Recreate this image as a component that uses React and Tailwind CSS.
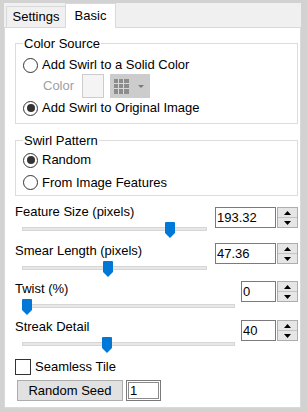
import React from 'react';

function Radio({ checked, label }) {
  return (
    <div className="flex items-center gap-[4px]">
      <span className="w-[15px] h-[15px] rounded-full border border-[#333] bg-white flex items-center justify-center">
        {checked && <span className="w-[8px] h-[8px] rounded-full bg-[#333]" />}
      </span>
      <span>{label}</span>
    </div>
  );
}

function Thumb() {
  return (
    <svg width="10" height="16" viewBox="0 0 10 16">
      <path d="M1 0H9A1 1 0 0 1 10 1V11L5 16L0 11V1A1 1 0 0 1 1 0Z" fill="#0078d7" />
    </svg>
  );
}

function Slider({ thumbLeft, trackClass }) {
  return (
    <div className="relative h-[20px] pt-[6px]">
      <div className={`h-[4px] ml-[7px] bg-[#e7e7e7] border border-[#d6d6d6] ${trackClass}`} />
      <div className="absolute top-[1px]" style={{ left: thumbLeft }}>
        <Thumb />
      </div>
    </div>
  );
}

function Spin({ value, inputClass }) {
  return (
    <div className="flex h-[21px]">
      <div className={`h-full border border-[#7a7a7a] bg-white pl-[1px] leading-[19px] ${inputClass}`}>{value}</div>
      <div className="ml-[1px] w-[21px] h-full border border-[#adadad] bg-[#e6e6e6] flex flex-col">
        <div className="flex-1 flex items-center justify-center border-b border-[#c4c4c4]">
          <svg width="7" height="4" viewBox="0 0 7 4"><path d="M0 4L3.5 0L7 4Z" fill="#000" /></svg>
        </div>
        <div className="flex-1 flex items-center justify-center">
          <svg width="7" height="4" viewBox="0 0 7 4"><path d="M0 0L3.5 4L7 0Z" fill="#000" /></svg>
        </div>
      </div>
    </div>
  );
}

function Setting({ label, thumbLeft, trackClass, value, inputClass, spinClass, className }) {
  return (
    <div className={`flex items-start ${className}`}>
      <div className="flex-1 min-w-0">
        <div className="h-[18px] leading-[18px]">{label}</div>
        <Slider thumbLeft={thumbLeft} trackClass={trackClass} />
      </div>
      <div className={spinClass}>
        <Spin value={value} inputClass={inputClass} />
      </div>
    </div>
  );
}

export default function App() {
  return (
    <div className="w-[307px] h-[412px] bg-[#d2d2d2] pt-[3px] pl-[4px] pr-[6px] pb-[4px] flex flex-col text-[13px] text-black font-['Liberation_Sans',Arial,sans-serif]">
      {/* Tabs */}
      <div className="h-[24px] bg-[#f0f0f0] flex items-end">
        <div className="ml-[2px] w-[60px] h-[21px] border border-b-0 border-[#d9d9d9] bg-[#f0f0f0] flex items-center justify-center leading-[20px]">
          Settings
        </div>
        <div className="relative z-10 -ml-[1px] -mb-[1px] w-[51px] h-[25px] border border-b-0 border-[#d9d9d9] bg-white flex items-center justify-center leading-[20px]">
          Basic
        </div>
      </div>

      {/* Panel */}
      <div className="flex-1 bg-white border border-[#d9d9d9] pl-[10px] pr-[2px] flex flex-col">
        <fieldset className="mt-[7px] border border-[#dcdcdc] pl-[7px] pb-[5px]">
          <legend className="px-[1px] leading-[17px]">Color Source</legend>
          <div className="mt-[2px] h-[22px] flex items-center">
            <Radio label="Add Swirl to a Solid Color" />
          </div>
          <div className="-mt-[2px] h-[24px] flex items-center">
            <span className="ml-[20px] w-[39px] text-[#a0a0a0]">Color</span>
            <span className="w-[22px] h-[24px] border border-[#cccccc] bg-[#f4f4f4]" />
            <span className="ml-[6px] w-[40px] h-[24px] bg-[#cccccc] flex items-center pl-[4px]">
              <svg width="15" height="15" viewBox="0 0 15 15">
                <rect x="0" y="0" width="15" height="15" fill="#d9d9d9" />
                <rect x="0" y="0" width="4" height="4" fill="#8c8c8c" />
                <rect x="5" y="0" width="4" height="4" fill="#8c8c8c" />
                <rect x="10" y="0" width="5" height="4" fill="#8c8c8c" />
                <rect x="0" y="5" width="4" height="4" fill="#8c8c8c" />
                <rect x="5" y="5" width="4" height="4" fill="#8c8c8c" />
                <rect x="10" y="5" width="5" height="4" fill="#8c8c8c" />
                <rect x="0" y="10" width="4" height="5" fill="#8c8c8c" />
                <rect x="5" y="10" width="4" height="5" fill="#8c8c8c" />
                <rect x="10" y="10" width="5" height="5" fill="#8c8c8c" />
              </svg>
              <svg className="ml-[9px]" width="6" height="3" viewBox="0 0 6 3"><path d="M0 0L3 3L6 0Z" fill="#7a7a7a" /></svg>
            </span>
          </div>
          <div className="h-[20px] flex items-center">
            <Radio checked label="Add Swirl to Original Image" />
          </div>
        </fieldset>

        <fieldset className="mt-[8px] border border-[#dcdcdc] pl-[7px] pb-[1px]">
          <legend className="px-[1px] leading-[17px]">Swirl Pattern</legend>
          <div className="h-[22px] flex items-center">
            <Radio checked label="Random" />
          </div>
          <div className="h-[23px] flex items-center">
            <Radio label="From Image Features" />
          </div>
        </fieldset>

        <Setting
          className="mt-[7px]"
          label="Feature Size (pixels)"
          thumbLeft={150}
          trackClass="mr-[8px]"
          value="193.32"
          inputClass="w-[61px]"
          spinClass="mt-[4px]"
        />
        <Setting
          className="mt-[1px]"
          label="Smear Length (pixels)"
          thumbLeft={88}
          trackClass="mr-[8px]"
          value="47.36"
          inputClass="w-[61px]"
          spinClass="mt-[1px]"
        />
        <Setting
          label="Twist (%)"
          thumbLeft={7}
          trackClass="mr-[6px]"
          value="0"
          inputClass="w-[35px]"
          spinClass="mt-[1px]"
        />
        <Setting
          label="Streak Detail"
          thumbLeft={87}
          trackClass="mr-[6px]"
          value="40"
          inputClass="w-[35px]"
          spinClass="mt-[2px]"
        />

        <div className="h-[22px] flex items-center gap-[4px]">
          <span className="w-[16px] h-[16px] border border-[#333] bg-white" />
          <span>Seamless Tile</span>
        </div>
        <div className="mt-[2px] flex items-center">
          <button className="ml-[2px] w-[106px] h-[21px] bg-[#e1e1e1] border border-[#adadad] leading-[19px]">
            Random Seed
          </button>
          <div className="ml-[3px] w-[35px] h-[21px] border border-[#7a7a7a] bg-white shadow-[inset_0_0_0_1px_#fff,inset_0_0_0_2px_#8a8a8a] pl-[3px] leading-[19px]">
            1
          </div>
        </div>
      </div>
    </div>
  );
}
